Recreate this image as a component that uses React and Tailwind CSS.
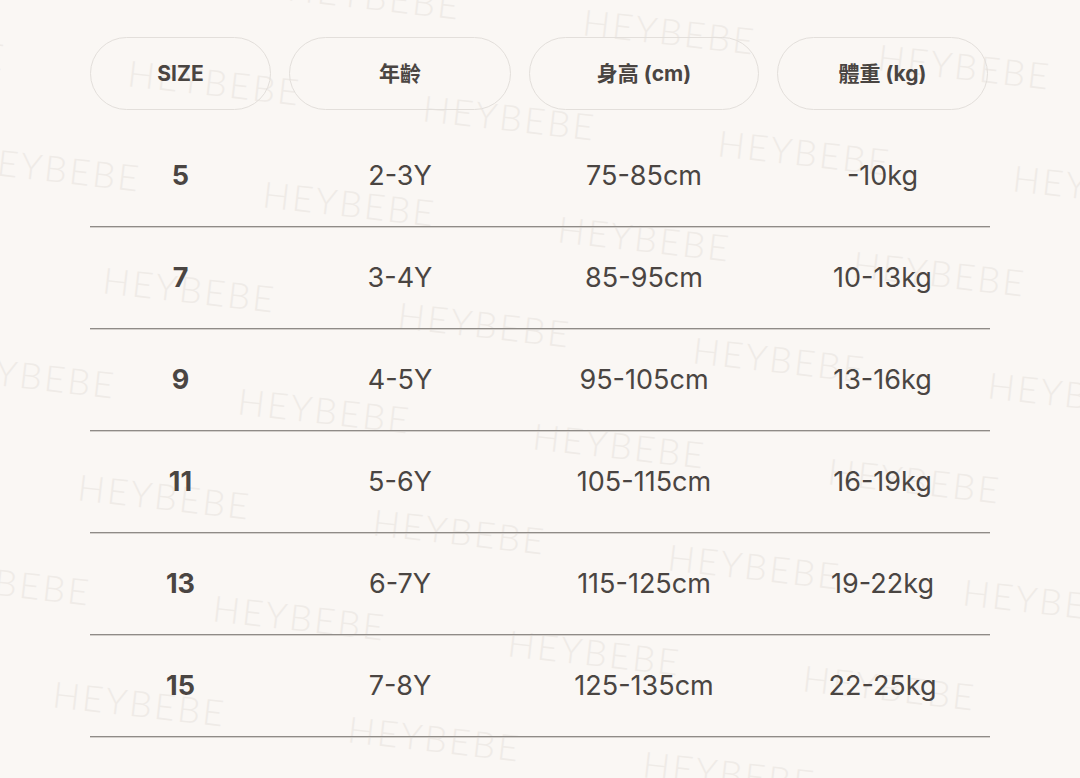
import React from "react";

const rows = [
  ["5", "2-3Y", "75-85cm", "-10kg"],
  ["7", "3-4Y", "85-95cm", "10-13kg"],
  ["9", "4-5Y", "95-105cm", "13-16kg"],
  ["11", "5-6Y", "105-115cm", "16-19kg"],
  ["13", "6-7Y", "115-125cm", "19-22kg"],
  ["15", "7-8Y", "125-135cm", "22-25kg"],
];

const widths = ["w-[181px]", "w-[222px]", "w-[230px]", "w-[211px]"];
const heads = ["SIZE", "年齡", "身高 (cm)", "體重 (kg)"];

function Watermarks() {
  const marks = [];
  for (let i = -4; i <= 9; i++) {
    for (let j = -4; j <= 6; j++) {
      const x = 128 + i * 135 + j * 295;
      const y = 72 + i * 121 + j * 35;
      if (x < -220 || x > 1090 || y < -50 || y > 820) continue;
      marks.push(
        <span
          key={`${i}_${j}`}
          className="absolute whitespace-nowrap text-[36px] leading-[36px] tracking-[2.5px] text-[#efebe7] origin-[0_50%] rotate-[6.5deg]"
          style={{ left: x, top: y - 18, fontFamily: '"Lato", "Open Sans", sans-serif', fontWeight: 300 }}
        >
          HEYBEBE
        </span>
      );
    }
  }
  return <div className="absolute inset-0 pointer-events-none z-0">{marks}</div>;
}

export default function App() {
  return (
    <div
      className="relative w-[1080px] h-[778px] overflow-hidden bg-[#faf7f4] text-[#4a4542]"
      style={{ fontFamily: 'Inter, "Noto Sans CJK TC", sans-serif' }}
    >
      <Watermarks />
      <div className="relative z-10 w-[900px] ml-[90px] pt-[37px]">
        <div className="flex gap-[18px]">
          {heads.map((h, k) => (
            <div
              key={h}
              className={`${widths[k]} h-[73px] rounded-full border border-[#e3dfdb] flex items-center justify-center text-[21px] font-bold`}
            >
              {h}
            </div>
          ))}
        </div>
        <div className="mt-[15px]">
          {rows.map((r, ri) => (
            <div
              key={ri}
              className="flex gap-[18px] h-[102px] items-center pt-[2px] border-b border-[#8f8b87] shadow-[0_1px_0_#d3cfcb]"
            >
              {r.map((c, k) => (
                <div
                  key={k}
                  className={`${widths[k]} text-center text-[27px] ${k === 0 ? "font-bold" : "font-normal"}`}
                >
                  {c}
                </div>
              ))}
            </div>
          ))}
        </div>
      </div>
    </div>
  );
}
